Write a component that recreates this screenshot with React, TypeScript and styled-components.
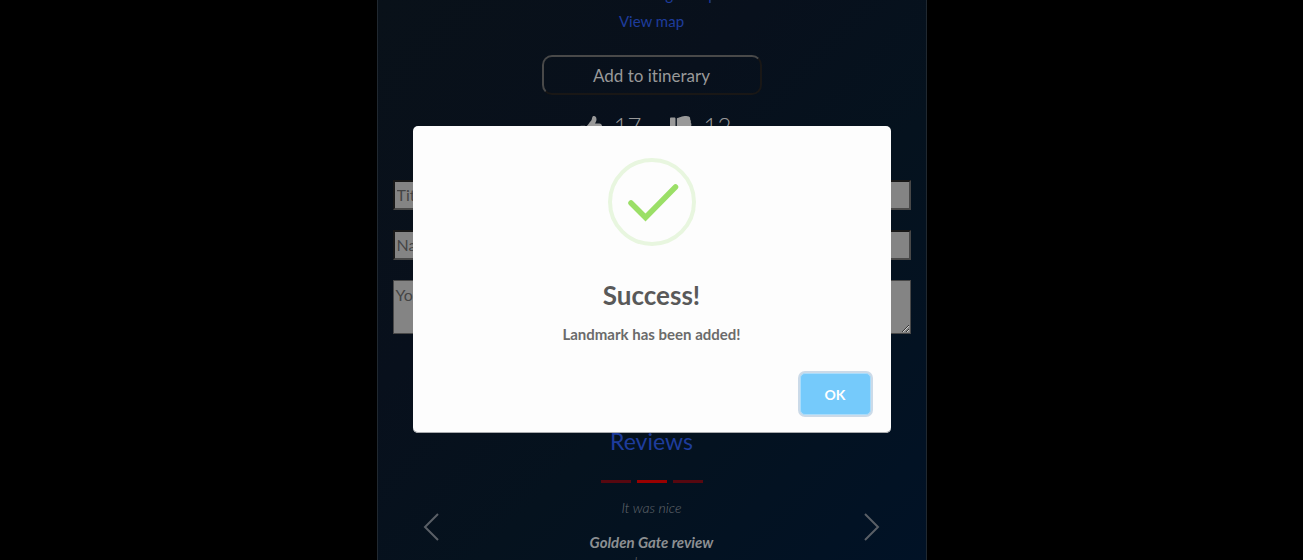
import React from "react";
import styled, { createGlobalStyle } from "styled-components";
import { FaThumbsDown, FaThumbsUp } from "react-icons/fa";

const GlobalStyle = createGlobalStyle`
  * { box-sizing: border-box; }
  body {
    margin: 0;
    background: #000;
    font-family: "Gill Sans", Lato, "Open Sans", sans-serif;
    font-variant-ligatures: none;
  }
`;

const Page = styled.div`
  height: 100vh;
  overflow: hidden;
  display: flex;
  justify-content: center;
`;

const Card = styled.main`
  width: 100%;
  max-width: 550px;
  min-height: 100vh;
  padding: 0 15px;
  border: solid #202830;
  border-width: 0 1px;
  background: linear-gradient(135deg, #091119 0%, #08101c 35%, #05121e 60%, #011226 100%);
  display: flex;
  flex-direction: column;
  align-items: center;
`;

const Links = styled.nav`
  display: flex;
  flex-direction: column;
  align-items: center;
  gap: 2px;
  margin-top: -18px;
`;

const MapLink = styled.a`
  color: #1e3c9c;
  font-size: 15px;
  line-height: 25px;
  text-decoration: none;
`;

const ItineraryButton = styled.button`
  width: 220px;
  height: 40px;
  flex: none;
  margin-top: 21px;
  border: 2px solid;
  border-color: #494949 #191716 #191716 #494949;
  border-radius: 10px;
  background: transparent;
  color: #999;
  font: 17px "Gill Sans", Lato, sans-serif;
  font-variant-ligatures: none;
`;

const Votes = styled.div`
  display: flex;
  gap: 28px;
  margin-top: 16px;
  padding-left: 8px;
  height: 32px;
  flex: none;
`;

const Vote = styled.span`
  display: flex;
  align-items: center;
  gap: 12px;
  color: #999;
  font-size: 24px;
  font-weight: 300;
`;

const VoteCount = styled.span`
  padding-bottom: 4px;
`;

const ReviewForm = styled.form`
  align-self: stretch;
  display: flex;
  flex-direction: column;
  gap: 20px;
  margin-top: 37px;
`;

const Field = styled.input`
  width: 100%;
  height: 30px;
  padding: 0 2px 2px;
  border: 2px solid;
  border-color: #171717 #484848 #484848 #171717;
  background: #848484;
  font: 16px "Gill Sans", Lato, sans-serif;
  &::placeholder { color: #444; }
`;

const Message = styled.textarea`
  width: 100%;
  height: 54px;
  padding: 4px 2px;
  border: 1px solid #484848;
  background: #848484;
  font: 16px "Gill Sans", Lato, sans-serif;
  &::placeholder { color: #444; }
`;

const Reviews = styled.section`
  align-self: stretch;
  display: flex;
  flex-direction: column;
  align-items: center;
  margin-top: 91px;
`;

const ReviewsTitle = styled.h2`
  margin: 0;
  color: #1e3c9c;
  font-size: 23px;
  line-height: 32px;
  font-weight: 400;
`;

const Indicators = styled.div`
  display: flex;
  gap: 6px;
  margin-top: 23px;
`;

const Indicator = styled.button<{ $active?: boolean }>`
  width: 30px;
  height: 3px;
  padding: 0;
  border: 0;
  background: ${(p) => (p.$active ? "#990000" : "#570810")};
`;

const Slide = styled.div`
  align-self: stretch;
  display: flex;
  justify-content: space-between;
  align-items: flex-start;
  padding: 0 30px;
  margin-top: 13px;
`;

const ArrowButton = styled.button`
  display: flex;
  padding: 0;
  margin-top: 17px;
  border: 0;
  background: transparent;
  color: #5a5f66;
`;

const Quote = styled.blockquote`
  margin: 0;
  text-align: center;
  color: #666b70;
  font-size: 14px;
  font-style: italic;
  font-weight: 300;
  line-height: 24px;
`;

const QuoteText = styled.p`
  margin: 0 0 10px;
`;

const QuoteTitle = styled.p`
  margin: 0;
  color: #8c8f92;
  font-size: 15px;
  font-weight: 700;
`;

const QuoteAuthor = styled.p`
  margin: 0;
  line-height: 16px;
`;

const Overlay = styled.div`
  position: fixed;
  inset: 0;
  padding-bottom: 1px;
  display: flex;
  align-items: center;
  justify-content: center;
`;

const Modal = styled.div`
  width: 478px;
  max-width: 90%;
  padding: 32px 20px 18px;
  border-radius: 5px;
  background: #fdfdfd;
  box-shadow: inset 0 -1px 0 #a9abae;
  display: flex;
  flex-direction: column;
  align-items: center;
`;

const ModalTitle = styled.h1`
  margin: 31px 0 0;
  color: #595959;
  font-size: 26px;
  line-height: 36px;
  font-weight: 700;
`;

const ModalText = styled.p`
  margin: 11px 0 0;
  color: #6b6b6b;
  font-size: 15px;
  line-height: 20px;
  font-weight: 700;
`;

const OkButton = styled.button`
  align-self: flex-end;
  width: 71px;
  height: 42px;
  margin-top: 29px;
  border: 1px solid #a9dcfb;
  border-radius: 5px;
  background: #75cafb;
  box-shadow: 0 0 0 2px #cbdae8;
  color: #fff;
  font: 700 14px "Gill Sans", Lato, sans-serif;
`;

function SuccessIcon() {
  return (
    <svg width="88" height="88" viewBox="0 0 88 88" fill="none" aria-hidden="true">
      <circle cx="44" cy="44" r="42" stroke="#e8f6df" strokeWidth="4" />
      <path d="M23 45 37.500 59.500 67.500 29" stroke="#9bdf67" strokeWidth="5.500" strokeLinecap="round" />
    </svg>
  );
}

function Chevron({ d }: { d: string }) {
  return (
    <svg width="16" height="28" viewBox="0 0 16 28" fill="none" stroke="currentColor" strokeWidth="2" aria-hidden="true">
      <path d={d} />
    </svg>
  );
}

export default function App() {
  return (
    <>
      <GlobalStyle />
      <Page>
        <Card>
          <Links>
            <MapLink href="#google-maps">View on Google maps</MapLink>
            <MapLink href="#map">View map</MapLink>
          </Links>
          <ItineraryButton type="button">Add to itinerary</ItineraryButton>
          <Votes>
            <Vote><FaThumbsUp size={22} /><VoteCount>17</VoteCount></Vote>
            <Vote><FaThumbsDown size={22} /><VoteCount>12</VoteCount></Vote>
          </Votes>
          <ReviewForm>
            <Field aria-label="Title" placeholder="Title" />
            <Field aria-label="Name" placeholder="Name" />
            <Message aria-label="Your review" placeholder="Your review" />
          </ReviewForm>
          <Reviews>
            <ReviewsTitle>Reviews</ReviewsTitle>
            <Indicators>
              <Indicator type="button" aria-label="Review 1" />
              <Indicator type="button" aria-label="Review 2" $active />
              <Indicator type="button" aria-label="Review 3" />
            </Indicators>
            <Slide>
              <ArrowButton type="button" aria-label="Previous"><Chevron d="M15 1 2 14 15 27" /></ArrowButton>
              <Quote>
                <QuoteText>It was nice</QuoteText>
                <QuoteTitle>Golden Gate review</QuoteTitle>
                <QuoteAuthor>by me</QuoteAuthor>
              </Quote>
              <ArrowButton type="button" aria-label="Next"><Chevron d="M1 1 14 14 1 27" /></ArrowButton>
            </Slide>
          </Reviews>
        </Card>
      </Page>
      <Overlay>
        <Modal role="dialog" aria-modal="true" aria-labelledby="modal-title">
          <SuccessIcon />
          <ModalTitle id="modal-title">Success!</ModalTitle>
          <ModalText>Landmark has been added!</ModalText>
          <OkButton type="button">OK</OkButton>
        </Modal>
      </Overlay>
    </>
  );
}
